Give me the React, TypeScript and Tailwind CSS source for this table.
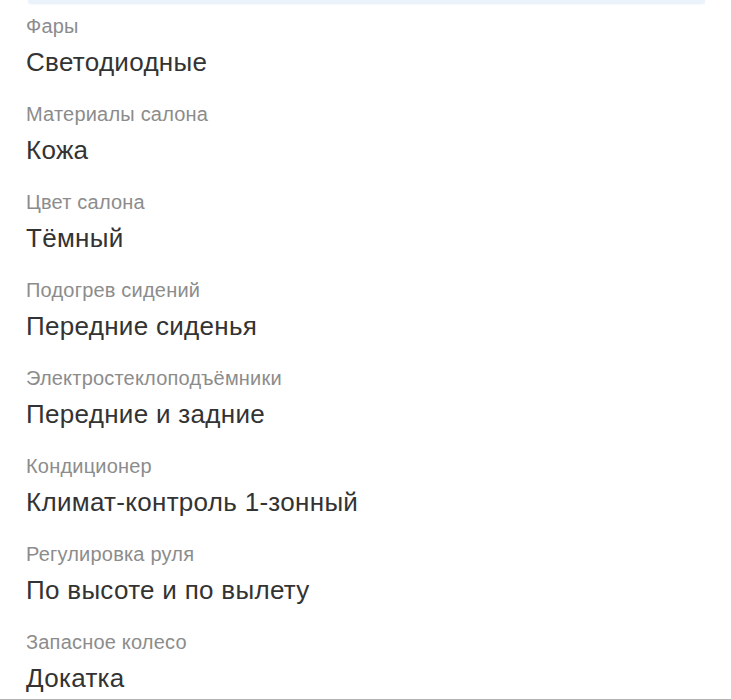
const specs: { label: string; value: string }[] = [
	{ label: "Фары", value: "Светодиодные" },
	{ label: "Материалы салона", value: "Кожа" },
	{ label: "Цвет салона", value: "Тёмный" },
	{ label: "Подогрев сидений", value: "Передние сиденья" },
	{ label: "Электростеклоподъёмники", value: "Передние и задние" },
	{ label: "Кондиционер", value: "Климат-контроль 1-зонный" },
	{ label: "Регулировка руля", value: "По высоте и по вылету" },
	{ label: "Запасное колесо", value: "Докатка" },
];

export default function App() {
	return (
		<div className="w-[731px] h-[700px] bg-white overflow-hidden flex flex-col font-['Liberation_Sans',Arial,sans-serif]">
			{/* bottom edge of the card above */}
			<div className="h-[3px] ml-[28px] mr-[26px] bg-[#eaf2fb] rounded-b-md shadow-[0_1px_2px_rgba(180,200,225,0.35)]" />

			<div className="flex flex-col gap-[24px] pt-[11px] px-[26px]">
				{specs.map((s) => (
					<div key={s.label} className="flex flex-col">
						<span className="text-[20px] leading-[24px] tracking-[0.2px] text-[#8c8c8c]">{s.label}</span>
						<span className="mt-[8px] text-[26px] leading-[32px] tracking-[0.3px] text-[#333333]">{s.value}</span>
					</div>
				))}
			</div>

			<div className="mt-auto h-px bg-[#b3b3b3]" />
		</div>
	);
}
